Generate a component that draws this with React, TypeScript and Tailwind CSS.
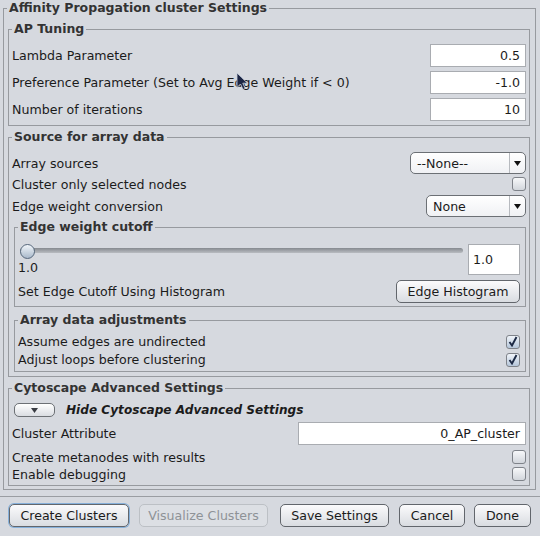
import type { ReactNode } from 'react';

const Box = ({ title, className = '', children }: { title: string; className?: string; children: ReactNode }) => (
  <fieldset className={`border border-[#979a9f] min-w-0 ${className}`}>
    <legend className="ml-[3px] px-[2px] text-[12.5px] leading-[16px] font-bold text-[#333333]">{title}</legend>
    {children}
  </fieldset>
);

const Field = ({ value, className = '' }: { value: string; className?: string }) => (
  <div className={`h-[23px] bg-white border border-[#a9acb1] flex items-center justify-end pr-[5px] ${className}`}>
    {value}
  </div>
);

const Check = ({ checked = false }: { checked?: boolean }) => (
  <span
    className={`w-[14px] h-[14px] rounded-[3px] border border-[#7f838a] flex items-center justify-center bg-linear-to-b ${
      checked ? 'from-[#f1f5fa] to-[#b5c6da]' : 'from-[#f7f8fa] to-[#d2d6dc]'
    }`}
  >
    {checked && (
      <svg width="10" height="11" viewBox="0 0 10 11">
        <path d="M1.5 6 L4 9.5 L8.5 1" stroke="#1d2a45" strokeWidth="1.9" fill="none" />
      </svg>
    )}
  </span>
);

const Arrow = () => (
  <svg width="7" height="5" viewBox="0 0 7 5">
    <path d="M0 0 H7 L3.5 5 Z" fill="#111" />
  </svg>
);

const Combo = ({ value, className = '' }: { value: string; className?: string }) => (
  <div className={`h-[22px] rounded-[5px] border border-[#6c7075] bg-linear-to-b from-white to-[#f0f1f4] flex items-center ${className}`}>
    <span className="flex-1 pl-[6px]">{value}</span>
    <span className="w-[16px] h-full border-l border-[#b7babf] flex items-center justify-center">
      <Arrow />
    </span>
  </div>
);

const Btn = ({ label, className = '', disabled = false, focused = false }: { label: string; className?: string; disabled?: boolean; focused?: boolean }) => (
  <div
    className={`h-[23px] rounded-[5px] border flex items-center justify-center ${
      disabled
        ? 'border-[#bcc0c5] bg-[#dcdfe4] text-[#8e9297]'
        : 'border-[#62666c] bg-linear-to-b from-[#fbfbfc] to-[#d9dce1] text-[#1b1b1b]'
    } ${focused ? 'shadow-[0_0_0_1px_#86b0da]' : ''} ${className}`}
  >
    {label}
  </div>
);

const Row = ({ label, children, className = '' }: { label: string; children: ReactNode; className?: string }) => (
  <div className={`flex items-center justify-between ${className}`}>
    <span>{label}</span>
    {children}
  </div>
);

export default function App() {
  return (
    <div className="relative w-[540px] h-[536px] overflow-hidden bg-[#d6d9df] font-['DejaVu_Sans',sans-serif] text-[12.6px] leading-[15px] text-[#1b1b1b]">
      <Box title="Affinity Propagation cluster Settings" className="ml-[3px] w-[533px]">
        <div className="pl-[4px] pr-[5px] pt-[5px] pb-[3px] flex flex-col gap-[3px]">
          {/* AP tuning */}
          <Box title="AP Tuning">
            <div className="pl-[3px] pr-[3px] pt-[7px] pb-[4px] flex flex-col gap-[4px]">
              <Row label="Lambda Parameter" className="h-[23px]">
                <Field value="0.5" className="w-[96px]" />
              </Row>
              <Row label="Preference Parameter (Set to Avg Edge Weight if < 0)" className="h-[23px]">
                <Field value="-1.0" className="w-[96px]" />
              </Row>
              <Row label="Number of iterations" className="h-[23px]">
                <Field value="10" className="w-[96px]" />
              </Row>
            </div>
          </Box>

          {/* Source for array data */}
          <Box title="Source for array data">
            <div className="pl-[3px] pr-[3px] pt-[7px] pb-[4px] flex flex-col">
              <Row label="Array sources" className="h-[22px]">
                <Combo value="--None--" className="w-[116px]" />
              </Row>
              <Row label="Cluster only selected nodes" className="h-[14px] mt-[3px]">
                <Check />
              </Row>
              <Row label="Edge weight conversion" className="h-[22px] mt-[4px]">
                <Combo value="None" className="w-[100px]" />
              </Row>

              <Box title="Edge weight cutoff" className="ml-[2px] mt-[2px]">
                <div className="pl-[3px] pr-[5px] pt-[9px] pb-[4px] flex flex-col">
                  <div className="flex h-[31px]">
                    <div className="flex-1 flex flex-col">
                      <div className="relative h-[16px] ml-[2px] flex items-center">
                        <div className="w-full h-[5px] rounded-full bg-linear-to-b from-[#868a90] to-[#b9bcc1]" />
                        <div className="absolute left-0 top-[0px] w-[15px] h-[15px] rounded-full border border-[#56677b] bg-linear-to-b from-[#f2f6fa] to-[#a9b9cb]" />
                      </div>
                      <span className="mt-[3px]">1.0</span>
                    </div>
                    <div className="ml-[5px] w-[52px] h-[31px] bg-white border border-[#a9acb1] flex items-center pl-[4px]">1.0</div>
                  </div>
                  <Row label="Set Edge Cutoff Using Histogram" className="h-[22px] mt-[5px]">
                    <Btn label="Edge Histogram" className="w-[124px] h-[22px]" />
                  </Row>
                </div>
              </Box>

              <Box title="Array data adjustments" className="ml-[2px] mt-[5px]">
                <div className="pl-[3px] pr-[5px] pt-[6px] pb-[4px] flex flex-col gap-[3px]">
                  <Row label="Assume edges are undirected" className="h-[15px]">
                    <Check checked />
                  </Row>
                  <Row label="Adjust loops before clustering" className="h-[15px]">
                    <Check checked />
                  </Row>
                </div>
              </Box>
            </div>
          </Box>

          {/* Cytoscape advanced */}
          <Box title="Cytoscape Advanced Settings">
            <div className="pl-[3px] pr-[3px] pt-[7px] pb-[4px] flex flex-col">
              <div className="h-[14px] flex items-center">
                <div className="ml-[2px] w-[41px] h-[14px] rounded-[5px] border border-[#6c7075] bg-linear-to-b from-white to-[#dadde2] flex items-center justify-center">
                  <svg width="7" height="5" viewBox="0 0 7 5">
                    <path d="M0 0 H7 L3.5 5 Z" fill="#3a3d44" />
                  </svg>
                </div>
                <span className="ml-[11px] text-[12.1px] font-bold italic text-[#1b1b1b]">Hide Cytoscape Advanced Settings</span>
              </div>
              <Row label="Cluster Attribute" className="h-[22px] mt-[5px]">
                <Field value="0_AP_cluster" className="w-[228px] h-[22px]" />
              </Row>
              <Row label="Create metanodes with results" className="h-[14px] mt-[6px]">
                <Check />
              </Row>
              <Row label="Enable debugging" className="h-[14px] mt-[3px]">
                <Check />
              </Row>
            </div>
          </Box>
        </div>
      </Box>

      {/* Button bar */}
      <div className="mt-[6px] border-t border-[#9a9da2] pt-[7px] flex">
        <Btn label="Create Clusters" focused className="ml-[9px] w-[120px]" />
        <Btn label="Visualize Clusters" disabled className="ml-[10px] w-[129px]" />
        <Btn label="Save Settings" className="ml-[12px] w-[109px]" />
        <Btn label="Cancel" className="ml-[10px] w-[66px]" />
        <Btn label="Done" className="ml-[9px] w-[57px]" />
      </div>

      {/* mouse pointer */}
      <svg className="absolute left-[236px] top-[72px]" width="13" height="19" viewBox="0 0 13 19">
        <path d="M1 1 L1 15.5 L4.5 12 L7 17.5 L9.2 16.5 L6.8 11.2 L11.5 11.2 Z" fill="#1c2544" stroke="#c8cfdc" strokeWidth="0.8" />
      </svg>
    </div>
  );
}
